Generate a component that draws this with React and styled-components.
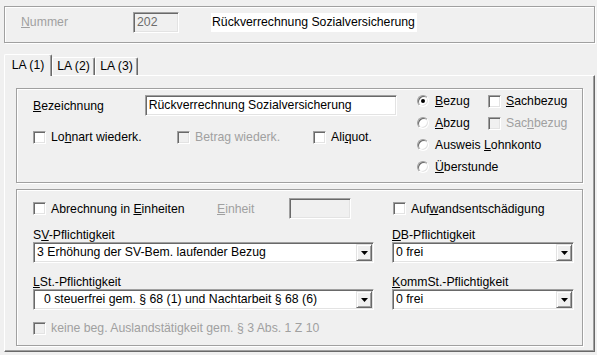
import React from 'react';
import styled, { createGlobalStyle, css } from 'styled-components';

const GlobalStyle = createGlobalStyle`
  html, body { margin: 0; padding: 0; background: #f0f0f0; }
  body {
    font-family: "Liberation Sans", Arial, sans-serif;
    font-size: 12.25px;
    color: #000;
  }
  * { box-sizing: border-box; }
`;

const etched = css`
  border: 1px solid #a0a0a0;
  box-shadow: 1px 1px 0 #fff, inset 1px 1px 0 #fff;
`;

const sunken = css`
  border: 1px solid;
  border-color: #a0a0a0 #fff #fff #a0a0a0;
  box-shadow: inset 1px 1px 0 #696969, inset -1px -1px 0 #e3e3e3;
`;

const Window = styled.div`
  width: 597px;
  height: 355px;
  padding: 6px 0 0 4px;
  background: #f0f0f0;
  overflow: hidden;
  display: flex;
  flex-direction: column;
`;

const HeaderGroup = styled.div`
  ${etched}
  width: 591px;
  height: 37px;
  flex: none;
  display: flex;
  align-items: flex-start;
  padding: 5px 0 0 16px;
`;

const HeaderLabel = styled.div`
  width: 112px;
  line-height: 21px;
  color: #a0a0a0;
`;

const NumberField = styled.div`
  ${sunken}
  width: 46px;
  height: 21px;
  padding: 1px 3px;
  line-height: 17px;
  color: #6d6d6d;
  background: #f0f0f0;
`;

const Title = styled.div`
  margin: 1px 0 0 32px;
  width: 206px;
  height: 19px;
  padding-left: 1px;
  line-height: 19px;
  background: #fff;
  white-space: nowrap;
`;

const TabStrip = styled.div`
  margin-top: 11px;
  height: 21px;
  flex: none;
  display: flex;
  align-items: flex-end;
  position: relative;
  z-index: 1;
`;

const Tab = styled.div`
  width: ${p => (p.$active ? 48 : 43)}px;
  height: ${p => (p.$active ? 22 : 18)}px;
  margin-bottom: ${p => (p.$active ? -1 : 0)}px;
  padding-top: ${p => (p.$active ? 3 : 1)}px;
  line-height: ${p => (p.$active ? 15 : 14)}px;
  background: #f0f0f0;
  border-top: 1px solid #fff;
  border-left: 1px solid #fff;
  border-right: 1px solid #696969;
  box-shadow: inset -1px 0 0 #a0a0a0;
  border-radius: 2px 2px 0 0;
  text-align: center;
  white-space: nowrap;
`;

const Panel = styled.div`
  width: 591px;
  height: 277px;
  flex: none;
  border: 1px solid;
  border-color: #fff #696969 #696969 #fff;
  box-shadow: inset -1px -1px 0 #a0a0a0;
  padding: 12px 0 0 11px;
  display: flex;
  flex-direction: column;
  gap: 6px;
`;

const Group = styled.div`
  ${etched}
  width: 567px;
  height: ${p => p.$height}px;
  flex: none;
`;

const TypeGroup = styled(Group)`
  display: flex;
  padding-left: 16px;
`;

const TypeLeft = styled.div`
  width: 364px;
  padding-top: 6px;
`;

const NameRow = styled.div`
  display: flex;
  align-items: center;
  height: 21px;
`;

const RowLabel = styled.div`
  width: ${p => p.$width}px;
  line-height: 14px;
  color: ${p => (p.$disabled ? '#a0a0a0' : '#000')};
  white-space: nowrap;
`;

const TextInput = styled.div`
  ${sunken}
  width: ${p => p.$width}px;
  height: 21px;
  padding: 1px 3px;
  line-height: 17px;
  background: ${p => (p.$disabled ? '#f0f0f0' : '#fff')};
  white-space: nowrap;
  overflow: hidden;
`;

const FlagsRow = styled.div`
  margin-top: 11px;
  height: 20px;
  display: grid;
  grid-template-columns: 144px 136px auto;
  align-items: center;
`;

const TypeRight = styled.div`
  margin-left: 20px;
  padding-top: 1px;
  display: grid;
  grid-template-columns: 71px auto;
  grid-auto-rows: 22px;
  align-items: center;
  align-content: start;
`;

const DetailGroup = styled(Group)`
  display: grid;
  grid-template-columns: 341px 182px;
  column-gap: 18px;
  align-content: start;
  padding: 8px 0 0 16px;
`;

const UnitRow = styled.div`
  height: 21px;
  display: grid;
  grid-template-columns: 184px 72px 62px;
  align-items: center;
`;

const RightCell = styled.div`
  height: 21px;
  display: flex;
  align-items: center;
  padding-left: 1px;
`;

const Field = styled.div`
  margin-top: ${p => p.$top}px;
  display: flex;
  flex-direction: column;
`;

const FieldLabel = styled.div`
  height: 14px;
  line-height: 14px;
  white-space: nowrap;
`;

const Select = styled.div`
  ${sunken}
  height: 21px;
  padding: 1px;
  background: #fff;
  display: flex;
`;

const SelectText = styled.div`
  flex: 1;
  padding-left: ${p => p.$indent}px;
  line-height: 17px;
  white-space: nowrap;
  overflow: hidden;
`;

const DropButton = styled.div`
  width: 16px;
  height: 17px;
  flex: none;
  background: #f0f0f0;
  border: 1px solid;
  border-color: #e3e3e3 #696969 #696969 #e3e3e3;
  box-shadow: inset 1px 1px 0 #fff, inset -1px -1px 0 #a0a0a0;
  display: flex;
  align-items: center;
  justify-content: center;
`;

const FootRow = styled.div`
  grid-column: 1 / -1;
  margin-top: 8px;
  height: 20px;
  display: flex;
  align-items: center;
`;

const CheckItem = styled.label`
  display: inline-flex;
  align-items: center;
  gap: 5px;
  color: ${p => (p.$disabled ? '#a0a0a0' : '#000')};
  white-space: nowrap;
`;

const Box = styled.span`
  ${sunken}
  width: 13px;
  height: 13px;
  flex: none;
  background: ${p => (p.$disabled ? '#f0f0f0' : '#fff')};
`;

const RadioItem = styled.label`
  display: inline-flex;
  align-items: center;
  gap: 6px;
  white-space: nowrap;
`;

const RadioDot = styled.span`
  width: 12px;
  height: 12px;
  flex: none;
  border-radius: 50%;
  background: #fff;
  border: 1px solid;
  border-color: #a0a0a0 #fff #fff #a0a0a0;
  box-shadow: inset 1px 1px 0 #696969, inset -1px -1px 0 #e3e3e3;
  display: flex;
  align-items: center;
  justify-content: center;
  &::after {
    content: '';
    width: 4px;
    height: 4px;
    border-radius: 50%;
    background: #000;
    display: ${p => (p.$checked ? 'block' : 'none')};
  }
`;

const Key = styled.span`
  text-decoration: underline;
  text-underline-offset: 1px;
`;

const Check = ({ children, disabled }) => (
  <CheckItem $disabled={disabled}>
    <Box $disabled={disabled} />
    <span>{children}</span>
  </CheckItem>
);

const Radio = ({ children, checked }) => (
  <RadioItem>
    <RadioDot $checked={checked} />
    <span>{children}</span>
  </RadioItem>
);

const Arrow = () => (
  <svg width="7" height="4" viewBox="0 0 7 4">
    <polygon points="0,0 7,0 3.5,4" fill="#000" />
  </svg>
);

const Combo = ({ value, indent = 2 }) => (
  <Select>
    <SelectText $indent={indent}>{value}</SelectText>
    <DropButton>
      <Arrow />
    </DropButton>
  </Select>
);

export default function App() {
  return (
    <>
      <GlobalStyle />
      <Window>
        <HeaderGroup>
          <HeaderLabel>
            <Key>N</Key>ummer
          </HeaderLabel>
          <NumberField>202</NumberField>
          <Title>Rückverrechnung Sozialversicherung</Title>
        </HeaderGroup>

        <TabStrip>
          <Tab $active>LA (1)</Tab>
          <Tab>LA (2)</Tab>
          <Tab>LA (3)</Tab>
        </TabStrip>

        <Panel>
          <TypeGroup $height={95}>
            <TypeLeft>
              <NameRow>
                <RowLabel $width={112}>
                  <Key>B</Key>ezeichnung
                </RowLabel>
                <TextInput $width={253}>Rückverrechnung Sozialversicherung</TextInput>
              </NameRow>
              <FlagsRow>
                <Check>
                  Lo<Key>h</Key>nart wiederk.
                </Check>
                <Check disabled>
                  Betra<Key>g</Key> wiederk.
                </Check>
                <Check>
                  Ali<Key>q</Key>uot.
                </Check>
              </FlagsRow>
            </TypeLeft>
            <TypeRight>
              <Radio checked>
                <Key>B</Key>ezug
              </Radio>
              <Check>
                <Key>S</Key>achbezug
              </Check>
              <Radio>
                <Key>A</Key>bzug
              </Radio>
              <Check disabled>
                Sac<Key>h</Key>bezug
              </Check>
              <Radio>
                Ausweis <Key>L</Key>ohnkonto
              </Radio>
              <span />
              <Radio>
                <Key>Ü</Key>berstunde
              </Radio>
              <span />
            </TypeRight>
          </TypeGroup>

          <DetailGroup $height={157}>
            <UnitRow>
              <Check>
                Abrechnung in <Key>E</Key>inheiten
              </Check>
              <RowLabel $disabled>
                <Key>E</Key>inheit
              </RowLabel>
              <TextInput $width={62} $disabled />
            </UnitRow>
            <RightCell>
              <Check>
                Auf<Key>w</Key>andsentschädigung
              </Check>
            </RightCell>

            <Field $top={9}>
              <FieldLabel>
                S<Key>V</Key>-Pflichtigkeit
              </FieldLabel>
              <Combo value="3 Erhöhung der SV-Bem. laufender Bezug" />
            </Field>
            <Field $top={9}>
              <FieldLabel>
                <Key>D</Key>B-Pflichtigkeit
              </FieldLabel>
              <Combo value="0 frei" />
            </Field>

            <Field $top={12}>
              <FieldLabel>
                <Key>L</Key>St.-Pflichtigkeit
              </FieldLabel>
              <Combo value="0 steuerfrei gem. § 68 (1) und Nachtarbeit § 68 (6)" indent={9} />
            </Field>
            <Field $top={12}>
              <FieldLabel>
                <Key>K</Key>ommSt.-Pflichtigkeit
              </FieldLabel>
              <Combo value="0 frei" />
            </Field>

            <FootRow>
              <Check disabled>keine beg. Auslandstätigkeit gem. § 3 Abs. 1 Z 10</Check>
            </FootRow>
          </DetailGroup>
        </Panel>
      </Window>
    </>
  );
}
